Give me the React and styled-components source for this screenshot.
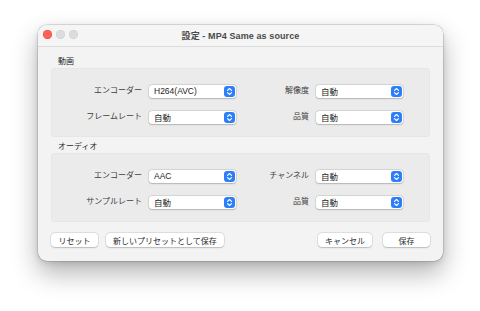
import React from 'react';
import styled, { createGlobalStyle } from 'styled-components';

const GlobalStyle = createGlobalStyle`
  html, body {
    margin: 0;
    padding: 0;
    background: #ffffff;
  }
  body {
    font-family: "Liberation Sans", "Noto Sans CJK JP", sans-serif;
    -webkit-font-smoothing: antialiased;
  }
`;

const Stage = styled.div`
  width: 480px;
  height: 311px;
  padding: 25px 0 0 38px;
  box-sizing: border-box;
  overflow: hidden;
`;

const Window = styled.div`
  width: 405px;
  height: 236px;
  background: #f3f3f3;
  border-radius: 9px;
  box-shadow: 0 0 0 0.5px rgba(0, 0, 0, 0.22), 0 12px 26px rgba(0, 0, 0, 0.3), 0 2px 6px rgba(0, 0, 0, 0.12);
  display: flex;
  flex-direction: column;
  overflow: hidden;
`;

const TitleBar = styled.div`
  position: relative;
  height: 21px;
  flex: none;
  display: flex;
  align-items: center;
  justify-content: center;
  background: #f5f5f5;
  border-bottom: 1px solid #dddddd;
`;

const Lights = styled.div`
  position: absolute;
  left: 5px;
  top: 5px;
  display: flex;
  gap: 4px;
`;

const Light = styled.span`
  width: 9px;
  height: 9px;
  border-radius: 50%;
  background: ${p => (p.red ? '#fe5f57' : '#dcdcdc')};
  box-shadow: inset 0 0 0 0.5px ${p => (p.red ? 'rgba(200,40,30,0.5)' : 'rgba(0,0,0,0.08)')};
`;

const Title = styled.div`
  font-size: 9px;
  font-weight: 700;
  color: #4a4a4a;
  letter-spacing: 0.1px;
`;

const Content = styled.div`
  flex: 1;
  padding: 10px 13px 13px 13px;
  display: flex;
  flex-direction: column;
`;

const SectionLabel = styled.div`
  font-size: 8px;
  line-height: 10px;
  height: 10px;
  color: #2a2a2a;
  padding-left: 7px;
  margin-bottom: 1px;
  margin-top: ${p => (p.spaced ? '5px' : '0')};
`;

const Group = styled.div`
  height: 69px;
  box-sizing: border-box;
  background: #ebebeb;
  border-radius: 4px;
  box-shadow: inset 0 0 0 0.5px rgba(0, 0, 0, 0.04);
  display: grid;
  grid-template-columns: 84px 87px 66px 87px;
  grid-auto-rows: 14px;
  column-gap: 7px;
  row-gap: 12px;
  padding: 16px 26px 0 7px;
`;

const FieldLabel = styled.div`
  font-size: 8px;
  line-height: 14px;
  color: #404040;
  text-align: right;
  white-space: nowrap;
`;

const Select = styled.div`
  height: 13px;
  margin-top: 0.5px;
  background: #ffffff;
  border-radius: 3px;
  box-shadow: 0 0 0 0.5px rgba(0, 0, 0, 0.13), 0 0.5px 1.5px rgba(0, 0, 0, 0.18);
  display: flex;
  align-items: center;
  justify-content: space-between;
  padding: 0 1px 0 5px;
  font-size: 8.5px;
  color: #1e1e1e;
`;

const Stepper = styled.span`
  width: 11px;
  height: 11px;
  border-radius: 3px;
  background: #2d7ff9;
  display: flex;
  align-items: center;
  justify-content: center;
`;

const Footer = styled.div`
  margin-top: 11px;
  display: flex;
  align-items: center;
  justify-content: space-between;
`;

const ButtonGroup = styled.div`
  display: flex;
  gap: ${p => p.gap || 8}px;
`;

const Button = styled.div`
  width: ${p => p.w}px;
  height: 14px;
  box-sizing: border-box;
  background: #ffffff;
  border-radius: 4px;
  box-shadow: 0 0 0 0.5px rgba(0, 0, 0, 0.12), 0 0.5px 1.5px rgba(0, 0, 0, 0.18);
  display: flex;
  align-items: center;
  justify-content: center;
  font-size: 8px;
  color: #2a2a2a;
  white-space: nowrap;
`;

const Chevrons = () => (
  <svg width="7" height="9" viewBox="0 0 7 9" fill="none">
    <path d="M1.5 3.4 L3.5 1.5 L5.5 3.4" stroke="#fff" strokeWidth="1.1" strokeLinecap="round" strokeLinejoin="round" />
    <path d="M1.5 5.6 L3.5 7.5 L5.5 5.6" stroke="#fff" strokeWidth="1.1" strokeLinecap="round" strokeLinejoin="round" />
  </svg>
);

const PopUp = ({ value }) => (
  <Select>
    <span>{value}</span>
    <Stepper>
      <Chevrons />
    </Stepper>
  </Select>
);

const sections = [
  {
    title: '動画',
    fields: [
      ['エンコーダー', 'H264(AVC)', '解像度', '自動'],
      ['フレームレート', '自動', '品質', '自動'],
    ],
  },
  {
    title: 'オーディオ',
    fields: [
      ['エンコーダー', 'AAC', 'チャンネル', '自動'],
      ['サンプルレート', '自動', '品質', '自動'],
    ],
  },
];

export default function App() {
  return (
    <Stage>
      <GlobalStyle />
      <Window>
        <TitleBar>
          <Lights>
            <Light red />
            <Light />
            <Light />
          </Lights>
          <Title>設定 - MP4 Same as source</Title>
        </TitleBar>
        <Content>
          {sections.map((s, i) => (
            <React.Fragment key={s.title}>
              <SectionLabel spaced={i > 0}>{s.title}</SectionLabel>
              <Group>
                {s.fields.map(row =>
                  [
                    <FieldLabel key={row[0] + 'a'}>{row[0]}</FieldLabel>,
                    <PopUp key={row[0] + 'b'} value={row[1]} />,
                    <FieldLabel key={row[2] + 'c'}>{row[2]}</FieldLabel>,
                    <PopUp key={row[2] + 'd'} value={row[3]} />,
                  ]
                )}
              </Group>
            </React.Fragment>
          ))}
          <Footer>
            <ButtonGroup gap={8}>
              <Button w={47}>リセット</Button>
              <Button w={118}>新しいプリセットとして保存</Button>
            </ButtonGroup>
            <ButtonGroup gap={11}>
              <Button w={54}>キャンセル</Button>
              <Button w={47}>保存</Button>
            </ButtonGroup>
          </Footer>
        </Content>
      </Window>
    </Stage>
  );
}
